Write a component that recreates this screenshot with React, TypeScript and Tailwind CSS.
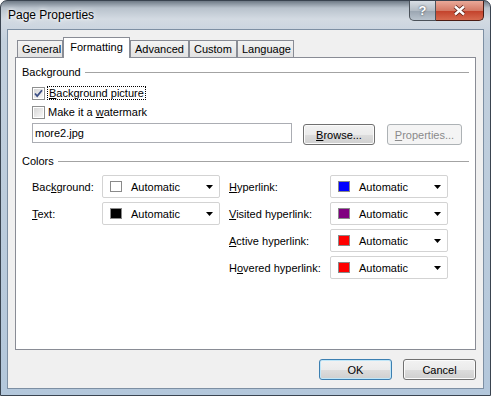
const font = { fontFamily: '"Liberation Sans", Arial, sans-serif' };

function Arrow() {
  return (
    <svg width="7" height="4" viewBox="0 0 7 4" className="ml-auto">
      <path d="M0 0h7L3.5 4z" fill="#000" />
    </svg>
  );
}

function Check({ checked }: { checked?: boolean }) {
  return (
    <div className="w-[13px] h-[13px] border border-[#8e8f8f] bg-white p-px shrink-0">
      <div className="w-full h-full bg-[linear-gradient(135deg,#d6d6d6,#f8f8f8)] flex items-center justify-center">
        {checked && (
          <svg width="9" height="9" viewBox="0 0 9 9">
            <path d="M1 4.5l2.2 2.5L8 1.2" fill="none" stroke="#3c4f86" strokeWidth="1.8" />
          </svg>
        )}
      </div>
    </div>
  );
}

function Combo({ color }: { color: string }) {
  return (
    <div className="w-[118px] h-[23px] border border-[#d3d3d3] rounded-[2px] bg-white flex items-center pl-[7px] pr-[6px]">
      <div className="w-[12px] h-[11px] border border-[#8a8a8a]" style={{ backgroundColor: color }} />
      <span className="ml-[9px]">Automatic</span>
      <Arrow />
    </div>
  );
}

function Btn({ children, w, def, disabled }: { children: React.ReactNode; w: string; def?: boolean; disabled?: boolean }) {
  const base = "h-[21px] rounded-[3px] border flex items-center justify-center " + w;
  if (disabled)
    return <div className={base + " border-[#adb2b5] bg-[#f4f4f4] text-[#8a8a8a]"}>{children}</div>;
  return (
    <div
      className={
        base +
        (def
          ? " border-[#3c7fb1] shadow-[inset_0_0_0_1px_#bfe6f8]"
          : " border-[#707070] shadow-[inset_0_0_0_1px_#fbfbfb]") +
        " bg-[linear-gradient(#f2f2f2_0%,#ebebeb_50%,#dddddd_51%,#cfcfcf_100%)]"
      }
    >
      {children}
    </div>
  );
}

function Tab({ label, w, active }: { label: string; w: string; active?: boolean }) {
  if (active)
    return (
      <div className={"relative z-10 -mb-px h-[21px] border border-b-0 border-[#898c95] bg-white flex justify-center pt-[2px] " + w}>
        {label}
      </div>
    );
  return (
    <div className={"h-[17px] border border-b-0 border-[#898c95] bg-[linear-gradient(#f3f3f3,#e2e2e2)] flex items-center pl-[4px] " + w}>
      {label}
    </div>
  );
}

function Group({ title }: { title: string }) {
  return (
    <div className="h-[14px] flex items-center gap-[4px]">
      <span>{title}</span>
      <div className="flex-1 h-px bg-[#a3a3a3]" />
    </div>
  );
}

export default function App() {
  return (
    <div
      style={font}
      className="w-[491px] h-[396px] flex flex-col rounded-t-[7px] border border-[#3a4450] text-[11px] leading-[14px] text-black bg-[linear-gradient(180deg,#6f7a86_0px,#b8c2cc_7px,#d3dae2_18px,#c3d0dd_40px,#b3c7db_100%)]"
    >
      <div className="h-[28px] flex items-start">
        <span className="ml-[7px] mt-[6px] text-[12px] leading-[16px] [text-shadow:0_0_6px_#ffffff,0_0_3px_#ffffff]">
          Page Properties
        </span>
        <div className="ml-auto mr-[6px] flex">
          <div className="w-[27px] h-[20px] rounded-bl-[5px] border border-[#4b525a] border-t-0 bg-[linear-gradient(#d8dee4,#b3bcc5_50%,#99a4b0_51%,#b9c3cd)] flex items-center justify-center text-white font-bold text-[13px] [text-shadow:0_0_2px_#2c3540]">
            ?
          </div>
          <div className="w-[48px] h-[20px] rounded-br-[5px] border border-l-0 border-t-0 border-[#4a1c14] bg-[linear-gradient(#e9a999,#d47a66_50%,#c2402a_51%,#d76a4f)] flex items-center justify-center">
            <svg width="13" height="11" viewBox="0 0 13 11">
              <path d="M2 1.5l9 8M11 1.5l-9 8" stroke="#5a1e14" strokeWidth="4" />
              <path d="M2 1.5l9 8M11 1.5l-9 8" stroke="#ffffff" strokeWidth="2.4" />
            </svg>
          </div>
        </div>
      </div>

      <div className="mx-[6px] flex-1 border border-[#7d8fa3] bg-[#f0f0f0] flex flex-col px-[7px] pt-[7px]">
        <div className="h-[20px] flex items-end pl-[2px]">
          <Tab label="General" w="w-[46px]" />
          <Tab label="Formatting" w="w-[67px]" active />
          <Tab label="Advanced" w="w-[59px]" />
          <Tab label="Custom" w="w-[48px]" />
          <Tab label="Language" w="w-[57px]" />
        </div>

        <div className="h-[293px] border border-[#898c95] bg-white px-[6px]">
          <div className="mt-[7px]">
            <Group title="Background" />
          </div>
          <div className="pl-[10px]">
            <div className="mt-[6px] h-[16px] flex items-center gap-[2px]">
              <Check checked />
              <span className="border border-dotted border-black px-px leading-[12px]">
                <u>B</u>ackground picture
              </span>
            </div>
            <div className="mt-[3px] h-[16px] flex items-center gap-[3px]">
              <Check />
              <span>
                Make it a <u>w</u>atermark
              </span>
            </div>
            <div className="mt-[3px] flex items-start">
              <div className="w-[260px] h-[20px] border border-[#abadb3] bg-white flex items-center pl-[2px]">
                more2.jpg
              </div>
              <div className="ml-[11px] mt-px">
                <Btn w="w-[72px]">
                  <span>
                    <u>B</u>rowse...
                  </span>
                </Btn>
              </div>
              <div className="ml-[12px] mt-px">
                <Btn w="w-[75px]" disabled>
                  <span>
                    <u>P</u>roperties...
                  </span>
                </Btn>
              </div>
            </div>
          </div>

          <div className="mt-[9px]">
            <Group title="Colors" />
          </div>
          <div className="pl-[10px] mt-[7px] flex">
            <div className="flex flex-col gap-[4px]">
              <div className="h-[23px] flex items-center">
                <span className="w-[70px]">
                  Bac<u>k</u>ground:
                </span>
                <Combo color="#ffffff" />
              </div>
              <div className="h-[23px] flex items-center">
                <span className="w-[70px]">
                  <u>T</u>ext:
                </span>
                <Combo color="#000000" />
              </div>
            </div>
            <div className="ml-[9px] flex flex-col gap-[4px]">
              <div className="h-[23px] flex items-center">
                <span className="w-[101px]">
                  <u>H</u>yperlink:
                </span>
                <Combo color="#0000ff" />
              </div>
              <div className="h-[23px] flex items-center">
                <span className="w-[101px]">
                  <u>V</u>isited hyperlink:
                </span>
                <Combo color="#800080" />
              </div>
              <div className="h-[23px] flex items-center">
                <span className="w-[101px]">
                  <u>A</u>ctive hyperlink:
                </span>
                <Combo color="#ff0000" />
              </div>
              <div className="h-[23px] flex items-center">
                <span className="w-[101px]">
                  H<u>o</u>vered hyperlink:
                </span>
                <Combo color="#ff0000" />
              </div>
            </div>
          </div>
        </div>

        <div className="mt-[9px] flex justify-end gap-[11px]">
          <Btn w="w-[73px]" def>
            OK
          </Btn>
          <Btn w="w-[73px]">Cancel</Btn>
        </div>
      </div>
      <div className="h-[6px]" />
    </div>
  );
}
